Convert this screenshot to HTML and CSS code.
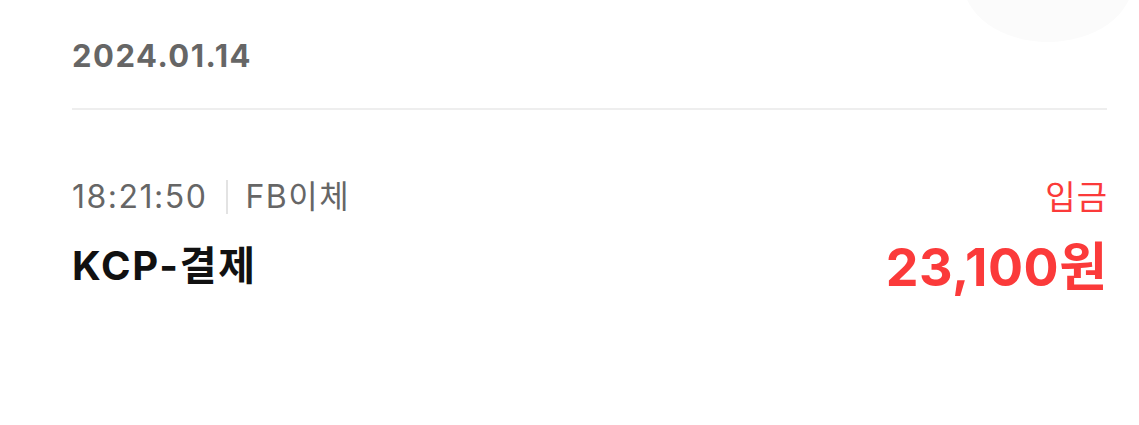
FILE: index.html
```html
<!DOCTYPE html>
<html lang="ko">
<head>
    <meta charset="UTF-8">
    <meta name="viewport" content="width=device-width, initial-scale=1.0">
    <title>거래내역</title>
    <link rel="stylesheet" href="styles.css">
</head>
<body>
    <div class="glow"></div>
    <div class="history">
        <div class="date">2024.01.14</div>
        <div class="tx">
            <div class="tx-left">
                <div class="meta">
                    <span class="time">18:21:50</span>
                    <span class="sep"></span>
                    <span class="kind">FB이체</span>
                </div>
                <div class="title">KCP-결제</div>
            </div>
            <div class="tx-right">
                <div class="type">입금</div>
                <div class="amount">23,100원</div>
            </div>
        </div>
    </div>
</body>
</html>
```

FILE: styles.css
```css
body {
    margin: 0;
    background-color: #ffffff;
    font-family: Inter, "Noto Sans CJK KR", sans-serif;
    overflow: hidden;
}

/* 오른쪽 위 흐린 원 */
.glow {
    position: absolute;
    top: -80px;
    right: 6px;
    width: 170px;
    height: 122px;
    border-radius: 50%;
    background-color: #fbfbfb;
}

.history {
    position: relative;
    padding: 0 32px 0 72px;
}

.date {
    padding-top: 35px;
    padding-bottom: 31px;
    border-bottom: 2px solid #eeeeee;
    font-size: 31px;
    font-weight: 700;
    color: #666666;
    line-height: 42px;
    letter-spacing: 1.5px;
}

.tx {
    display: flex;
    justify-content: space-between;
    padding-top: 66px;
}

.meta {
    display: flex;
    align-items: center;
    font-size: 32px;
    color: #666666;
    line-height: 42px;
    letter-spacing: 1.5px;
}

.sep {
    width: 2px;
    height: 34px;
    margin: 0 17px 0 19px;
    background-color: #e3e3e3;
}

.title {
    margin-top: 23px;
    font-size: 40px;
    font-weight: 700;
    color: #111111;
    line-height: 50px;
    letter-spacing: 1.8px;
}

.tx-right {
    text-align: right;
}

.type {
    margin-right: -1px;
    font-size: 33px;
    color: #fb3a3a;
    line-height: 42px;
    letter-spacing: 1px;
}

.amount {
    margin-top: 22px;
    margin-right: -0.5px;
    font-size: 52px;
    font-weight: 700;
    color: #fb3a3a;
    line-height: 56px;
    letter-spacing: 0.5px;
}
```
